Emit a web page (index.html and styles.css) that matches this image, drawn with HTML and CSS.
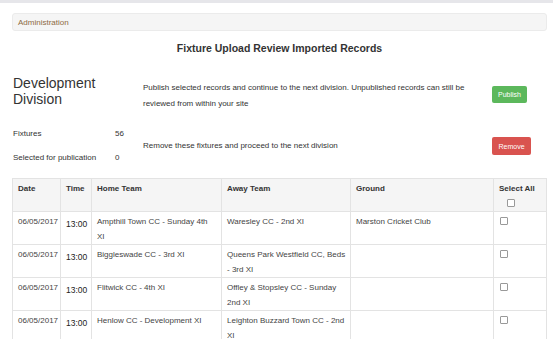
FILE: index.html
```html
<!DOCTYPE html>
<html lang="en">
<head>
    <meta charset="UTF-8">
    <title>Fixture Upload Review</title>
    <link rel="stylesheet" href="styles.css">
</head>
<body>
    <div class="topbar"></div>
    <div class="container">
        <div class="breadcrumb">Administration</div>

        <h1>Fixture Upload Review Imported Records</h1>

        <div class="division">
            <h2>Development Division</h2>
            <p class="note">Publish selected records and continue to the next division. Unpublished records can still be reviewed from within your site</p>
            <div class="action"><button class="btn btn-publish">Publish</button></div>
        </div>

        <div class="summary">
            <div class="counts">
                <div class="count-row"><span class="label">Fixtures</span><span>56</span></div>
                <div class="count-row"><span class="label">Selected for publication</span><span>0</span></div>
            </div>
            <p class="note">Remove these fixtures and proceed to the next division</p>
            <div class="action"><button class="btn btn-remove">Remove</button></div>
        </div>

        <table class="fixtures">
            <thead>
                <tr>
                    <th class="col-date">Date</th>
                    <th class="col-time">Time</th>
                    <th class="col-home">Home Team</th>
                    <th class="col-away">Away Team</th>
                    <th class="col-ground">Ground</th>
                    <th class="col-select">Select All<br><input type="checkbox" class="tick"></th>
                </tr>
            </thead>
            <tbody>
                <tr>
                    <td>06/05/2017</td>
                    <td class="time">13:00</td>
                    <td class="home">Ampthill Town CC - Sunday 4th XI</td>
                    <td>Waresley CC - 2nd XI</td>
                    <td>Marston Cricket Club</td>
                    <td><input type="checkbox" class="tick"></td>
                </tr>
                <tr>
                    <td>06/05/2017</td>
                    <td class="time">13:00</td>
                    <td class="home">Biggleswade CC - 3rd XI</td>
                    <td>Queens Park Westfield CC, Beds - 3rd XI</td>
                    <td></td>
                    <td><input type="checkbox" class="tick"></td>
                </tr>
                <tr>
                    <td>06/05/2017</td>
                    <td class="time">13:00</td>
                    <td class="home">Flitwick CC - 4th XI</td>
                    <td>Offley &amp; Stopsley CC - Sunday 2nd XI</td>
                    <td></td>
                    <td><input type="checkbox" class="tick"></td>
                </tr>
                <tr>
                    <td>06/05/2017</td>
                    <td class="time">13:00</td>
                    <td class="home">Henlow CC - Development XI</td>
                    <td>Leighton Buzzard Town CC - 2nd XI</td>
                    <td></td>
                    <td><input type="checkbox" class="tick"></td>
                </tr>
            </tbody>
        </table>
    </div>
</body>
</html>
```

FILE: styles.css
```css
body {
    font-family: "Liberation Sans", Arial, sans-serif;
    color: #333;
    background: #fff;
    margin: 0;
    font-size: 8px;
}
.topbar {
    height: 3px;
    background: #e6e6ea;
}
.container {
    margin-left: 12px;
    width: 535px;
}
.breadcrumb {
    margin-top: 10px;
    height: 18px;
    line-height: 18px;
    padding-left: 5px;
    background: #f5f5f5;
    border: 1px solid #ebebeb;
    border-radius: 3px;
    box-sizing: border-box;
    color: #8d6b43;
    font-size: 8px;
}
h1 {
    margin: 10px 0 0;
    font-size: 10.5px;
    line-height: 14px;
    text-align: center;
}
.division {
    display: flex;
    align-items: flex-start;
    margin-top: 20px;
}
.division h2 {
    width: 131px;
    margin: 0;
    font-size: 14px;
    font-weight: normal;
    line-height: 16px;
    padding-left: 1px;
    box-sizing: border-box;
}
.note {
    flex: 1;
    margin: 0;
    line-height: 16px;
}
.division .note {
    margin-top: 5px;
}
.action {
    width: 55px;
}
.division .action {
    margin-top: 11px;
}
.btn {
    border: none;
    border-radius: 2px;
    color: #fff;
    font-family: inherit;
    font-size: 7px;
    padding: 0;
    height: 18px;
}
.btn-publish {
    background: #5cb85c;
    width: 35px;
    height: 17px;
}
.btn-remove {
    background: #d9534f;
    width: 39px;
}
.summary {
    display: flex;
    align-items: center;
    margin-top: 10px;
}
.counts {
    width: 131px;
    padding-left: 1px;
    box-sizing: border-box;
}
.count-row {
    display: flex;
    line-height: 24px;
}
.count-row .label {
    width: 102px;
}
.fixtures {
    width: 100%;
    margin-top: 8px;
    border-collapse: collapse;
    table-layout: fixed;
    border: 1px solid #e3e3e3;
}
.fixtures th,
.fixtures td {
    border: 1px solid #e3e3e3;
    text-align: left;
    vertical-align: top;
    padding: 3px 2px 0 5px;
    line-height: 14.5px;
}
.fixtures td {
    color: #444;
}
.fixtures td.home {
    padding-right: 12px;
}
.fixtures th {
    background: #f5f5f5;
}
.fixtures .time {
    padding-top: 5px;
    font-size: 8.5px;
    line-height: 14px;
    color: #222;
}
.col-date { width: 40px; }
.col-time { width: 23px; }
.col-home { width: 122px; }
.col-away { width: 121px; }
.col-ground { width: 135px; }
.tick {
    appearance: none;
    display: inline-block;
    width: 8px;
    height: 8px;
    margin: 0 0 0 1px;
    border: 1px solid #999;
    border-radius: 1px;
    background: #fff;
    vertical-align: -1px;
}
.col-select .tick {
    margin-left: 8px;
}
```
